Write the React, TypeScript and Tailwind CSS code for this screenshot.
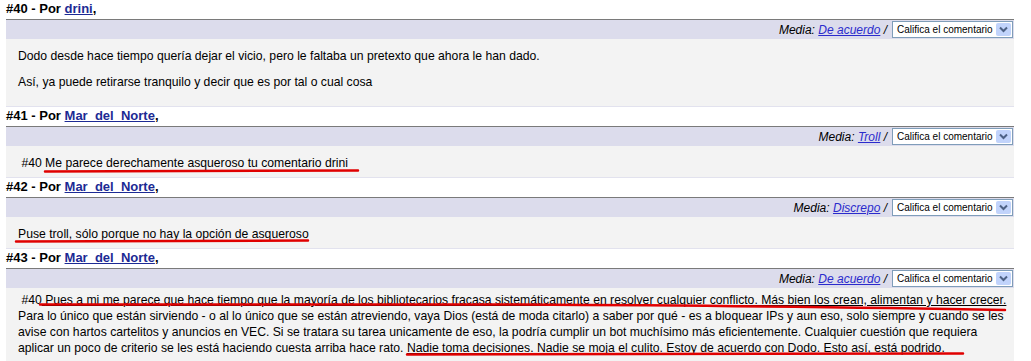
import React from "react";

type Comment = {
  num: number;
  author: string;
  media: string;
  pad: string;
  body: React.ReactNode;
};

const comments: Comment[] = [
  {
    num: 40,
    author: "drini",
    media: "De acuerdo",
    pad: "pt-[9px] pb-[6px]",
    body: (
      <>
        <p className="mb-[10px]">
          Dodo desde hace tiempo quería dejar el vicio, pero le faltaba un pretexto que ahora le han dado.
        </p>
        <p className="mb-[10px]">Así, ya puede retirarse tranquilo y decir que es por tal o cual cosa</p>
      </>
    ),
  },
  {
    num: 41,
    author: "Mar_del_Norte",
    media: "Troll",
    pad: "pt-[9px] pb-[6px]",
    body: <p>&nbsp;#40 Me parece derechamente asqueroso tu comentario drini</p>,
  },
  {
    num: 42,
    author: "Mar_del_Norte",
    media: "Discrepo",
    pad: "pt-[9px] pb-[6px]",
    body: <p>Puse troll, sólo porque no hay la opción de asqueroso</p>,
  },
  {
    num: 43,
    author: "Mar_del_Norte",
    media: "De acuerdo",
    pad: "pt-[4px] pb-[6px]",
    body: (
      <p className="whitespace-nowrap">
        &nbsp;#40
        <span className="underline">
          {" "}Pues a mi me parece que hace tiempo que la mayoría de los bibliotecarios fracasa sistemáticamente en resolver cualquier conflicto. Más bien los crean, alimentan y hacer crecer.
        </span>
        <br />
        Para lo único que están sirviendo - o al lo único que se están atreviendo, vaya Dios (está de moda citarlo) a saber por qué - es a bloquear IPs y aun eso, solo siempre y cuando se les
        <br />
        avise con hartos cartelitos y anuncios en VEC. Si se tratara su tarea unicamente de eso, la podría cumplir un bot muchísimo más eficientemente. Cualquier cuestión que requiera
        <br />
        aplicar un poco de criterio se les está haciendo cuesta arriba hace rato.{" "}
        <span className="underline">
          Nadie toma decisiones. Nadie se moja el culito. Estoy de acuerdo con Dodo. Esto así, está podrido.
        </span>
      </p>
    ),
  },
];

function RateBox() {
  return (
    <div className="flex h-[17px] w-[121px] items-center justify-between border border-[#7f9db9] bg-white pl-[4px] pr-[1px]">
      <span className="text-[10px] leading-none text-black">Califica el comentario</span>
      <span className="flex h-[13px] w-[15px] items-center justify-center rounded-[2px] bg-[#c1d3fb]">
        <svg width="9" height="7" viewBox="0 0 9 7">
          <path d="M1 1.5 L4.5 5 L8 1.5" fill="none" stroke="#4d6185" strokeWidth="2" />
        </svg>
      </span>
    </div>
  );
}

function CommentBlock({ c }: { c: Comment }) {
  return (
    <div>
      <div className="h-[20px] border-b border-[#7a7a7a] bg-white text-[13px] font-bold leading-[18px] text-black">
        #{c.num} - Por{" "}
        <a className="text-[#1c2a94] underline">{c.author}</a>,
      </div>
      <div className="flex h-[19px] items-center justify-end gap-[5px] bg-[#dcdcec] pr-[1px]">
        <span className="text-[12px] italic text-black">
          Media: <a className="text-[#2b2bcc] underline">{c.media}</a> /
        </span>
        <RateBox />
      </div>
      <div
        className={`border-b border-[#e2e2ee] bg-[#f3f3f3] px-[12px] text-[12.2px] leading-[16px] text-black ${c.pad}`}
      >
        {c.body}
      </div>
    </div>
  );
}

export default function App() {
  return (
    <div className="relative h-[361px] overflow-hidden bg-white font-['Liberation_Sans',Arial,sans-serif]">
      <div className="ml-[6px] w-[1008px]">
        {comments.map((c) => (
          <CommentBlock key={c.num} c={c} />
        ))}
      </div>
      <svg className="pointer-events-none absolute left-0 top-0" width="1031" height="361">
        <g fill="none" stroke="#e00000" strokeWidth="2.5" strokeLinecap="round">
          <path d="M45 171.5 L358 170.5" />
          <path d="M16 241.5 L308 240.5" />
          <path d="M40 304.5 L520 304.5 Q800 306 1005 310" />
          <path d="M407 354.5 L963 353.5" />
        </g>
      </svg>
    </div>
  );
}
